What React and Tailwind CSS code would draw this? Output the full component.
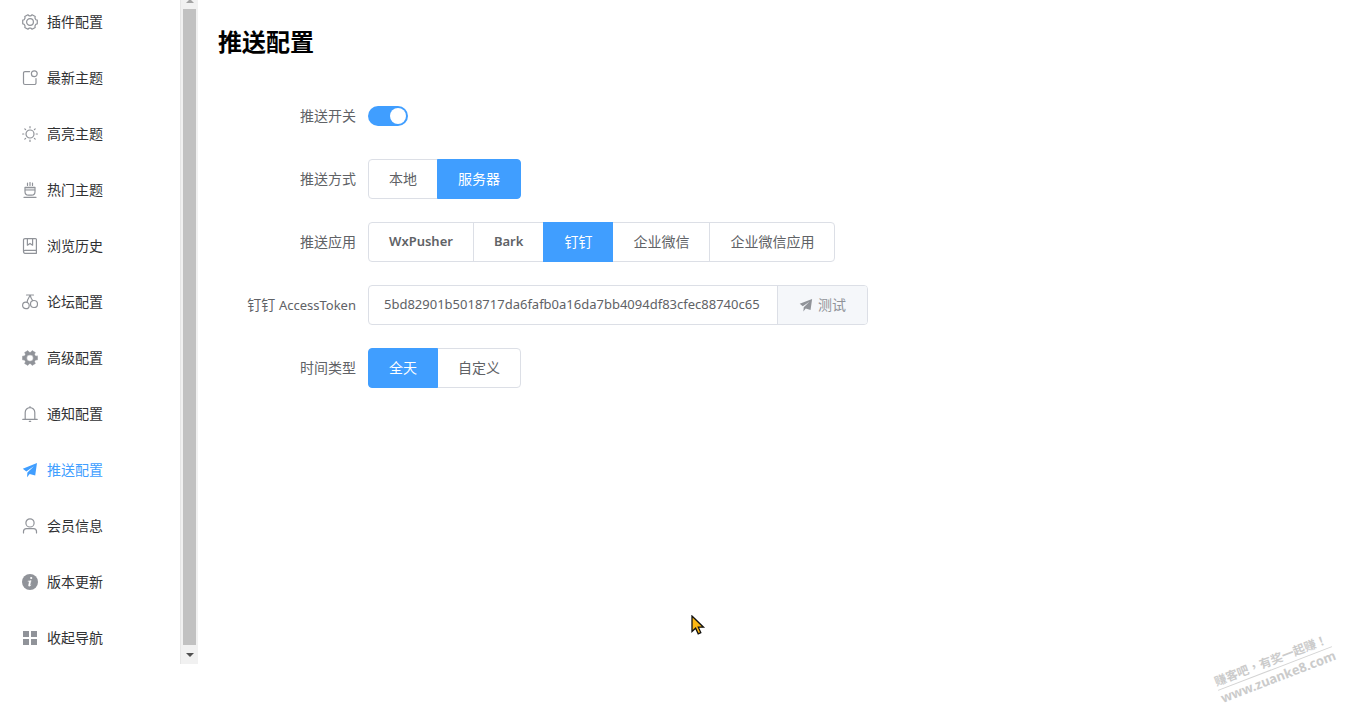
import { useState } from "react";

const gear = (outer, inner) => {
  const points = [];
  for (let i = 0; i < 6; i++) {
    const tooth = i * 60;
    [[tooth - 14, outer], [tooth + 14, outer], [tooth + 21, inner], [tooth + 39, inner]].forEach(([deg, r]) => {
      const a = (deg * Math.PI) / 180;
      points.push(`${(8 + r * Math.cos(a)).toFixed(2)} ${(8 + r * Math.sin(a)).toFixed(2)}`);
    });
  }
  return `M${points.join("L")}Z`;
};

function Icon({ children, className = "size-4" }) {
  return (
    <svg
      viewBox="0 0 16 16"
      className={`shrink-0 ${className}`}
      fill="none"
      stroke="currentColor"
      strokeWidth="1.2"
      strokeLinecap="round"
      strokeLinejoin="round"
      aria-hidden="true"
    >
      {children}
    </svg>
  );
}

const icons = {
  setting: (
    <>
      <path d={gear(7.5, 6.3)} />
      <circle cx="8" cy="8" r="3.4" />
    </>
  ),
  news: (
    <>
      <path d="M7.6 1.6H3a1.5 1.5 0 0 0-1.5 1.5V13A1.5 1.5 0 0 0 3 14.5h9.5A1.5 1.5 0 0 0 14 13V8.6" />
      <circle cx="12.3" cy="3.7" r="2.9" />
    </>
  ),
  sunny: (
    <>
      <circle cx="8" cy="8" r="4" />
      <path d="M8 .6v1.2M8 14.2v1.2M.6 8h1.2M14.2 8h1.2M2.8 2.8l.8.8M12.4 12.4l.8.8M13.2 2.8l-.8.8M3.6 12.4l-.8.8" />
    </>
  ),
  hot: (
    <>
      <path d="M5.5 1.2v2.2M8 .5v2.9M10.5 1.2v2.2" />
      <path d="M3.2 5.4h9.6v2.4H3.2z" fill="currentColor" fillOpacity=".3" stroke="none" />
      <path d="M3 5.3h10v4.4a3.4 3.4 0 0 1-3.4 3.4H6.4A3.4 3.4 0 0 1 3 9.7z" />
      <path d="M3.4 8h9.2" />
      <path d="M2 15.3h12" strokeWidth="1.3" />
    </>
  ),
  book: (
    <>
      <path d="M14.4 12.2V1.5a.9.9 0 0 0-.9-.9H3A1.5 1.5 0 0 0 1.5 2.1v11.5A1.6 1.6 0 0 0 3 15.3h11.4v-3H3a1.5 1.5 0 0 0-1.5 1.2" />
      <path d="M5.4.8v6.4L8 5.4l2.6 1.8V.8" />
    </>
  ),
  cherry: (
    <>
      <circle cx="3.9" cy="11.4" r="3.3" />
      <circle cx="12" cy="10" r="3.5" />
      <path d="M4.5 1h7M8.2 1.2C7 3.3 5.4 5.3 5.1 8.2M8.2 1.2c.4 2.2 1.2 4 2.5 5.4" />
    </>
  ),
  tools: (
    <path
      fillRule="evenodd"
      fill="currentColor"
      stroke="currentColor"
      strokeWidth=".5"
      d={`${gear(7.7, 5.8)}M8 4.7a3.3 3.3 0 1 0 0 6.6a3.3 3.3 0 0 0 0-6.6Z`}
    />
  ),
  bell: (
    <path d="M.8 13.4h14.4M3.2 13.2V6.4a4.8 4.8 0 0 1 9.6 0v6.8M8 1.4V.6M7.3 15.3h1.4" />
  ),
  send: (
    <path
      stroke="none"
      fill="currentColor"
      d="M15 1 .8 6.7l3.5 2.8 7.6-5.3-6.5 6.4L5 15.3l2.7-3.2 5.5 1.5z"
    />
  ),
  user: (
    <>
      <circle cx="8" cy="4.9" r="4.1" />
      <path d="M1.5 15v-1.4a3 3 0 0 1 3-3h7a3 3 0 0 1 3 3V15" />
    </>
  ),
  info: (
    <>
      <circle cx="8" cy="8" r="8" fill="currentColor" stroke="none" />
      <circle cx="9.2" cy="4" r="1.1" fill="white" stroke="none" />
      <path
        d="M6.2 7.2 9.1 6.5 7.9 11.2c-.1.5.2.5 1.2-.4-.8 1.4-2.6 2.1-2.6.7L7.3 7.6z"
        fill="white"
        stroke="white"
        strokeWidth=".4"
      />
    </>
  ),
  grid: (
    <path stroke="none" fill="currentColor" d="M1 1h6v6H1zM9 1h6v6H9zM1 9h6v6H1zM9 9h6v6H9z" />
  ),
};

const menu = [
  ["setting", "插件配置"],
  ["news", "最新主题"],
  ["sunny", "高亮主题"],
  ["hot", "热门主题"],
  ["book", "浏览历史"],
  ["cherry", "论坛配置"],
  ["tools", "高级配置"],
  ["bell", "通知配置"],
  ["send", "推送配置"],
  ["user", "会员信息"],
  ["info", "版本更新"],
  ["grid", "收起导航"],
];

function Sidebar() {
  const active = "推送配置";
  return (
    <aside className="flex h-[calc(100vh-57px)] w-[198px] shrink-0 overflow-hidden">
      <nav className="-mt-1.5 flex-1">
        <ul>
          {menu.map(([icon, label]) => (
            <li key={label}>
              <a
                href="#"
                aria-current={label === active ? "page" : undefined}
                className={`flex h-14 items-center gap-[9px] pl-[22px] text-sm ${
                  label === active ? "text-[#409eff]" : "text-[#303133]"
                }`}
              >
                <span className={label === active ? "text-[#409eff]" : "text-[#909399]"}>
                  <Icon>{icons[icon]}</Icon>
                </span>
                {label}
              </a>
            </li>
          ))}
        </ul>
      </nav>
      <div className="flex w-[18px] flex-col items-center border-l border-[#e6e6e6] bg-[#f1f1f1]" aria-hidden="true">
        <svg viewBox="0 0 8 9" className="h-[9px] w-2 shrink-0" fill="#a3a3a3">
          <path d="M3 0h2l3 3H0z" />
        </svg>
        <div className="w-[13px] flex-1 bg-[#c1c1c1]" />
        <svg viewBox="0 0 8 19" className="h-[19px] w-2 shrink-0" fill="#505050">
          <path d="M0 8h8L4 12z" />
        </svg>
      </div>
    </aside>
  );
}

function Field({ label, htmlFor, id, children }) {
  return (
    <div className="flex items-center">
      <label id={id} htmlFor={htmlFor} className="w-[150px] shrink-0 pr-3 text-right text-sm text-[#606266]">
        {label}
      </label>
      <div className="flex h-10 min-w-0 items-center">{children}</div>
    </div>
  );
}

function RadioButtons({ name, options, initial }) {
  const [value, setValue] = useState(initial);
  return (
    <div role="radiogroup" aria-labelledby={`${name}-label`} className="flex">
      {options.map((option) => (
        <label
          key={option}
          className="relative -ml-px flex h-10 cursor-pointer items-center border border-[#dcdfe6] px-5 text-[#606266] first:ml-0 first:rounded-l last:rounded-r has-checked:z-10 has-checked:border-[#409eff] has-checked:bg-[#409eff] has-checked:text-white"
        >
          <input
            type="radio"
            name={name}
            value={option}
            checked={value === option}
            onChange={() => setValue(option)}
            className="sr-only"
          />
          <span className={/^[A-Za-z]/.test(option) ? "text-[13px] font-semibold" : "text-sm"}>{option}</span>
        </label>
      ))}
    </div>
  );
}

export default function App() {
  const [enabled, setEnabled] = useState(true);
  const [token, setToken] = useState("5bd82901b5018717da6fafb0a16da7bb4094df83cfec88740c65");

  return (
    <div className="relative flex min-h-screen items-start overflow-hidden bg-white font-['Noto_Sans','Noto_Sans_CJK_SC',sans-serif]">
      <Sidebar />
      <main className="min-w-0 flex-1 px-5 pt-[26px]">
        <h1 className="text-2xl font-bold text-black">推送配置</h1>
        <form className="mt-[38px] flex flex-col gap-[23px]" onSubmit={(e) => e.preventDefault()}>
          <Field label="推送开关" htmlFor="push-enabled">
            <input
              id="push-enabled"
              type="checkbox"
              role="switch"
              checked={enabled}
              onChange={(e) => setEnabled(e.target.checked)}
              className="flex h-5 w-10 cursor-pointer appearance-none items-center rounded-full bg-[#dcdfe6] px-0.5 before:size-4 before:rounded-full before:bg-white checked:justify-end checked:bg-[#409eff]"
            />
          </Field>
          <Field label="推送方式" id="method-label">
            <RadioButtons name="method" options={["本地", "服务器"]} initial="服务器" />
          </Field>
          <Field label="推送应用" id="app-label">
            <RadioButtons
              name="app"
              options={["WxPusher", "Bark", "钉钉", "企业微信", "企业微信应用"]}
              initial="钉钉"
            />
          </Field>
          <Field
            label={
              <>
                钉钉 <span className="text-[13px]">AccessToken</span>
              </>
            }
            htmlFor="access-token"
          >
            <div className="flex h-10 w-[500px] max-w-full overflow-hidden rounded border border-[#dcdfe6]">
              <input
                id="access-token"
                type="text"
                value={token}
                onChange={(e) => setToken(e.target.value)}
                className="min-w-0 flex-1 px-[15px] text-[13px] text-[#606266] outline-none"
              />
              <button
                type="button"
                className="flex w-[90px] shrink-0 items-center justify-center gap-[5px] border-l border-[#dcdfe6] bg-[#f5f7fa] text-sm text-[#909399]"
              >
                <Icon className="size-[14px]">{icons.send}</Icon>
                测试
              </button>
            </div>
          </Field>
          <Field label="时间类型" id="time-label">
            <RadioButtons name="time" options={["全天", "自定义"]} initial="全天" />
          </Field>
        </form>
      </main>

      <svg viewBox="0 0 15 21" className="absolute left-[691px] top-[615px] h-[21px] w-[15px]" aria-hidden="true">
        <path
          d="M1 1v15.5l3.6-3.3 2.6 5.6 2.6-1.2-2.5-5.4h5.2z"
          fill="#fdb813"
          stroke="#111"
          strokeWidth="1.3"
          strokeLinejoin="miter"
        />
      </svg>

      <div className="absolute bottom-[36px] right-[20px] w-[122px] -rotate-[21deg] font-['Noto_Sans','Noto_Sans_CJK_TC',sans-serif] font-bold text-[#cbcbcb]">
        <p lang="zh-TW" className="whitespace-nowrap border-b border-[#d4d4d4] text-xs leading-4">
          赚客吧，有奖一起赚！
        </p>
        <p className="text-[13px] leading-4">www.zuanke8.com</p>
      </div>
    </div>
  );
}
